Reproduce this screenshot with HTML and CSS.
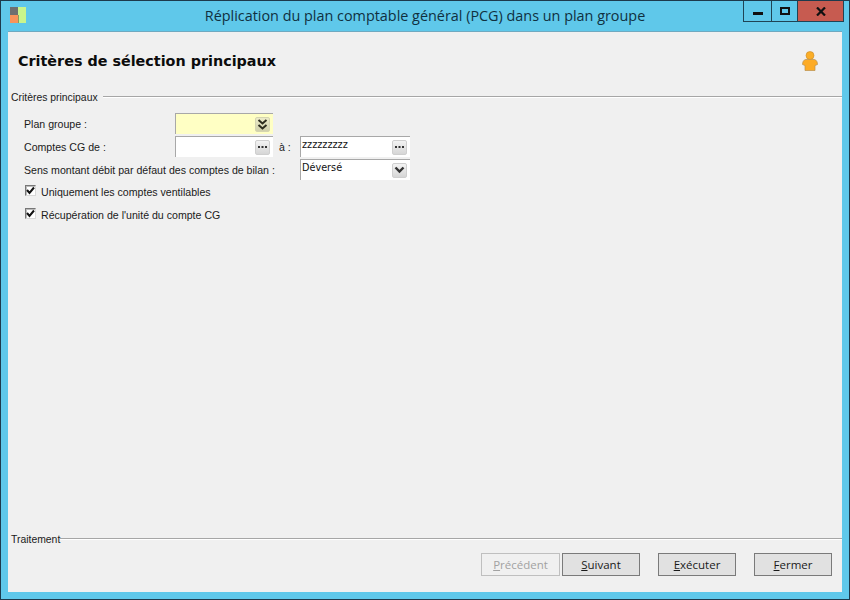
FILE: index.html
```html
<!DOCTYPE html>
<html lang="fr">
<head>
<meta charset="utf-8">
<title>Réplication du plan comptable général (PCG) dans un plan groupe</title>
<link rel="stylesheet" href="styles.css">
</head>
<body>
<div class="window">
  <header class="titlebar">
    <svg class="app-icon" width="16" height="16" viewBox="0 0 16 16">
      <rect x="0" y="0" width="8" height="8" fill="#6f6f6f"/>
      <rect x="0" y="8" width="8" height="8" fill="#f9935a"/>
      <rect x="8" y="0" width="8" height="16" fill="#c9f58c"/>
      <rect x="8" y="8" width="1" height="8" fill="#8a9a60"/>
    </svg>
    <div class="title">Réplication du plan comptable général (PCG) dans un plan groupe</div>
    <div class="controls">
      <div class="ctl ctl-min"><span class="glyph-min"></span></div>
      <div class="ctl ctl-max"><span class="glyph-max"></span></div>
      <div class="ctl ctl-close">
        <svg width="10" height="9" viewBox="0 0 10 9"><path d="M1 0.5L9 8.5M9 0.5L1 8.5" stroke="#111" stroke-width="2.2" fill="none"/></svg>
      </div>
    </div>
  </header>
  <main class="client">
    <div class="page-head">
      <h1 class="heading">Critères de sélection principaux</h1>
      <svg class="user-icon" width="16" height="20" viewBox="0 0 16 20">
        <circle cx="8" cy="4.5" r="4" fill="#fbae27" stroke="#c98a2a" stroke-width="0.6"/>
        <path d="M3.5 8.5H12.5C14.5 9 15.5 11 15.5 13.5L13 14.5V19.5H3V14.5L0.5 13.5C0.5 11 1.5 9 3.5 8.5Z" fill="#fdab25" stroke="#b9914f" stroke-width="0.7"/>
      </svg>
    </div>
    <section class="group">
      <div class="legend"><span>Critères principaux</span><i class="rule"></i></div>
      <div class="form">
        <label class="lbl">Plan groupe :</label>
        <div class="field field-req"><span class="btn-mini btn-mini-req">
          <svg width="11" height="11" viewBox="0 0 11 11"><path d="M1.5 1L5.5 4.5L9.5 1M1.5 6L5.5 9.5L9.5 6" stroke="#2d2d1e" stroke-width="2" fill="none"/></svg>
        </span></div>
        <span></span>
        <label class="lbl">Comptes CG de :</label>
        <div class="field"><span class="btn-mini">
          <svg width="9" height="3" viewBox="0 0 9 3"><path d="M0 0H2V2H0ZM3.5 0H5.5V2H3.5ZM7 0H9V2H7Z" fill="#333"/></svg>
        </span></div>
        <div class="second">
          <span class="lbl to">à :</span>
          <div class="field field-wide"><span class="val">zzzzzzzzz</span><span class="btn-mini">
            <svg width="9" height="3" viewBox="0 0 9 3"><path d="M0 0H2V2H0ZM3.5 0H5.5V2H3.5ZM7 0H9V2H7Z" fill="#333"/></svg>
          </span></div>
        </div>
        <label class="lbl lbl-span">Sens montant débit par défaut des comptes de bilan :</label>
        <div class="field field-wide"><span class="val">Déversé</span><span class="btn-mini">
          <svg width="11" height="8" viewBox="0 0 11 8"><path d="M1.5 1.5L5.5 5.5L9.5 1.5" stroke="#333" stroke-width="2.4" fill="none"/></svg>
        </span></div>
      </div>
      <div class="checks">
        <div class="check"><span class="box"><svg width="9" height="9" viewBox="0 0 9 9"><path d="M1 4L3.5 7L8 1.5" stroke="#111" stroke-width="2" fill="none"/></svg></span>Uniquement les comptes ventilables</div>
        <div class="check"><span class="box"><svg width="9" height="9" viewBox="0 0 9 9"><path d="M1 4L3.5 7L8 1.5" stroke="#111" stroke-width="2" fill="none"/></svg></span>Récupération de l'unité du compte CG</div>
      </div>
    </section>
    <footer class="group-foot">
      <div class="legend legend-foot"><span>Traitement</span><i class="rule"></i></div>
      <div class="actions">
        <button class="btn btn-first" disabled><u>P</u>récédent</button>
        <button class="btn"><u>S</u>uivant</button>
        <button class="btn gap-l"><u>E</u>xécuter</button>
        <button class="btn gap-l"><u>F</u>ermer</button>
      </div>
    </footer>
  </main>
</div>
</body>
</html>
```
FILE: styles.css
```css
* { box-sizing: border-box; }
html, body { margin: 0; padding: 0; }
body { width: 850px; height: 600px; overflow: hidden; font-family: "Liberation Sans", Arial, sans-serif; }
.window {
  width: 850px; height: 600px;
  background: #5fc8ea;
  border: 1px solid #1d3a4c;
  display: flex; flex-direction: column;
  padding: 0 7px 7px 7px;
}
.titlebar { height: 30px; flex: none; display: flex; align-items: center; position: relative; }
.app-icon { margin: -2px 0 0 2px; }
.title {
  position: absolute; left: 0; right: 0; top: 6px;
  text-align: center;
  font: 14.4px/18px "Open Sans", sans-serif; color: #10303f;
}
.controls {
  position: absolute; right: -2px; top: 0; height: 21px;
  display: flex;
  border: 1px solid #1f4455; border-top: 0;
}
.ctl { height: 20px; display: flex; align-items: center; justify-content: center; }
.ctl-min { width: 28px; border-right: 1px solid #1f4455; }
.ctl-max { width: 26px; border-right: 1px solid #1f4455; }
.ctl-close { width: 45px; background: #c75b50; }
.glyph-min { width: 10px; height: 3px; background: #111; margin-top: 5px; }
.glyph-max { width: 10px; height: 8px; border: 2px solid #111; margin-top: -1px; }
.client {
  flex: 1; background: #f0f0f0; display: flex; flex-direction: column;
  border-top: 1px solid #6fa9c0;
}
.page-head { height: 58px; display: flex; align-items: center; justify-content: space-between; padding: 0 24px 0 10px; flex: none; }
.heading { margin: 0; font: bold 14.35px/20px "DejaVu Sans", sans-serif; color: #0c0c0c; }
.user-icon { margin-top: 0; }
.group { flex: 1; }
.legend { display: flex; align-items: center; height: 14px; font-size: 10.4px; color: #1a1a1a; padding-left: 3px; gap: 5px; }
.legend-foot { gap: 0; }
.rule { flex: 1; height: 2px; background: #a6a6a6; border-bottom: 1px solid #fff; display: block; }
.form {
  display: grid;
  grid-template-columns: 151px 125px 110px;
  grid-auto-rows: 21px;
  row-gap: 2px;
  margin: 9px 0 0 16px;
  align-items: center;
}
.lbl { font-size: 10.6px; color: #1a1a1a; }
.lbl-span { grid-column: 1 / span 2; }
.field {
  width: 98px; height: 21px; background: #fff;
  border-left: 1px solid #a8a8a8; border-top: 1px solid #a8a8a8;
  display: flex; align-items: center; justify-content: flex-end;
  padding-right: 2px;
}
.field-req { background: #ffffc4; }
.field-wide { width: 110px; justify-content: space-between; padding-left: 1px; }
.val { font: 9.7px/12px "DejaVu Sans", sans-serif; color: #111; margin-top: -4px; }
.second { display: flex; align-items: center; margin-left: -21px; }
.to { width: 21px; flex: none; }
.btn-mini {
  width: 15px; height: 15px; background: linear-gradient(#f3f3f3, #d6d6d6); border-radius: 2px;
  border: 1px solid #cfcfcf; display: flex; align-items: center; justify-content: center;
  flex: none; margin-right: 1px;
}
.btn-mini-req { background: linear-gradient(#ecebc8, #d0d0ac); border-color: #d4d4b0; }
.checks { margin: 0 0 0 17px; }
.check { display: flex; align-items: center; height: 23px; font-size: 10.6px; color: #1a1a1a; }
.check .box {
  width: 11px; height: 11px; background: #fff;
  border: 1px solid #d8d8d8; border-top-color: #777; border-left-color: #777;
  box-shadow: inset 1px 1px 0 #bbb;
  display: flex; align-items: center; justify-content: center; margin-right: 5px; flex: none; margin-top: -2px;
}
.group-foot { flex: none; }
.actions { display: flex; justify-content: flex-end; padding: 7px 10px 16px 0; }
.btn {
  width: 78px; height: 23px; padding: 0; background: #e1e1e1; border: 1px solid #7a7a7a;
  font: 11.5px/1 "Open Sans", sans-serif; color: #1a1a1a; margin-left: 2px;
}
.btn-first { width: 79px; }
.btn[disabled] { background: #f0f0f0; border-color: #bfbfbf; color: #a2a2a2; }
.gap-l { margin-left: 18px; }
```
